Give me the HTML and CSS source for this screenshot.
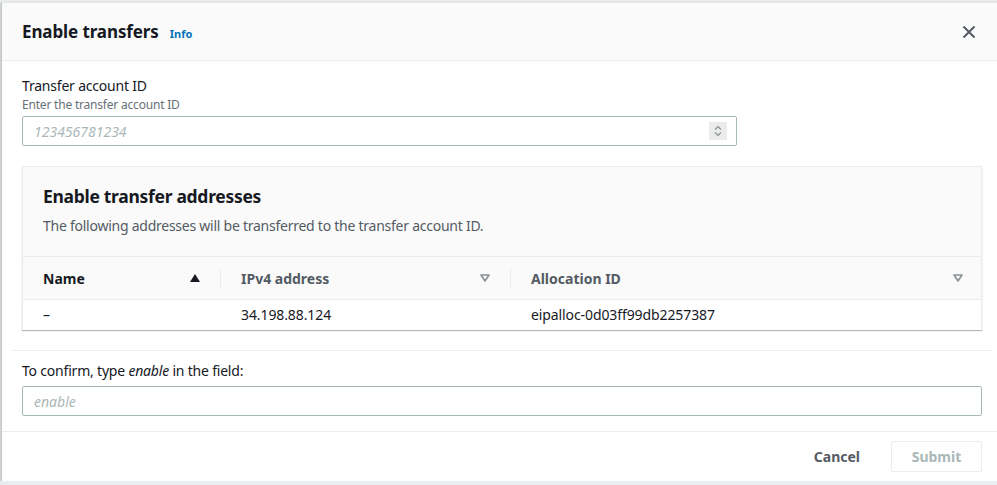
FILE: index.html
```html
<!DOCTYPE html>
<html lang="en">
<head>
    <meta charset="UTF-8">
    <meta name="viewport" content="width=device-width, initial-scale=1.0">
    <link rel="stylesheet" href="styles.css">
    <title>Enable transfers</title>
</head>
<body>
    <div class="modal">
        <div class="modal-header">
            <h2 class="modal-title">Enable transfers</h2>
            <a class="info" href="#">Info</a>
            <button class="close" aria-label="Close">
                <svg width="14" height="14" viewBox="0 0 14 14"><path d="M1.5 1.5 L12.5 12.5 M12.5 1.5 L1.5 12.5" stroke="#545b64" stroke-width="2" fill="none"/></svg>
            </button>
        </div>

        <div class="modal-body">
            <div class="field">
                <label class="label">Transfer account ID</label>
                <div class="hint">Enter the transfer account ID</div>
                <div class="input number-input">
                    <span class="placeholder">123456781234</span>
                    <span class="spinner">
                        <svg width="18" height="18" viewBox="0 0 18 18"><path d="M6 7.5 L9 4.5 L12 7.5 M6 10.5 L9 13.5 L12 10.5" stroke="#879196" stroke-width="1.2" fill="none"/></svg>
                    </span>
                </div>
            </div>

            <div class="container">
                <div class="container-header">
                    <h3 class="container-title">Enable transfer addresses</h3>
                    <p class="container-desc">The following addresses will be transferred to the transfer account ID.</p>
                </div>
                <div class="table">
                    <div class="th">
                        <span>Name</span>
                        <svg width="12" height="10" viewBox="0 0 12 10"><path d="M1 9 L6 1 L11 9 Z" fill="#16191f"/></svg>
                    </div>
                    <div class="th">
                        <span>IPv4 address</span>
                        <svg width="12" height="10" viewBox="0 0 12 10"><path d="M2 2 L10 2 L6 8 Z" stroke="#879196" stroke-width="1.6" fill="none" stroke-linejoin="round"/></svg>
                    </div>
                    <div class="th last">
                        <span>Allocation ID</span>
                        <svg width="12" height="10" viewBox="0 0 12 10"><path d="M2 2 L10 2 L6 8 Z" stroke="#879196" stroke-width="1.6" fill="none" stroke-linejoin="round"/></svg>
                    </div>
                    <div class="td">–</div>
                    <div class="td">34.198.88.124</div>
                    <div class="td">eipalloc-0d03ff99db2257387</div>
                </div>
            </div>

            <hr class="divider">

            <div class="field confirm">
                <label class="label">To confirm, type <em>enable</em> in the field:</label>
                <div class="input">
                    <span class="placeholder">enable</span>
                </div>
            </div>
        </div>

        <div class="modal-footer">
            <button class="btn-link">Cancel</button>
            <button class="btn-primary" disabled>Submit</button>
        </div>
    </div>
</body>
</html>
```

FILE: styles.css
```css
body {
    margin: 0;
    background-color: #eaeded;
    font-family: "Noto Sans", "Open Sans", sans-serif;
    color: #16191f;
    overflow: hidden;
}

.modal {
    margin: 2px 0 0 1px;
    width: 1000px;
    background-color: #fff;
    border-left: 1px solid #c4c7c8;
    border-top: 1px solid #e4e6e6;
    box-shadow: 0 1px 2px rgba(0, 0, 0, 0.35);
}

.modal-header {
    display: flex;
    align-items: center;
    height: 57px;
    padding: 0 20px;
    background-color: #fafafa;
    border-bottom: 1px solid #eaeded;
}

.modal-title {
    margin: 0;
    font-size: 17px;
    font-weight: 700;
    line-height: 22px;
    letter-spacing: -0.1px;
}

.info {
    margin-left: 11px;
    margin-top: 4px;
    font-size: 11px;
    font-weight: 700;
    color: #0073bb;
    text-decoration: none;
}

.close {
    margin-left: auto;
    margin-right: 6px;
    padding: 0;
    border: none;
    background: none;
    display: flex;
}

.modal-body {
    padding: 14px 20px 0 20px;
}

.label {
    display: block;
    font-size: 14px;
    line-height: 22px;
    letter-spacing: -0.2px;
}

.hint {
    font-size: 12px;
    line-height: 16px;
    color: #687078;
    margin-bottom: 3px;
    letter-spacing: -0.2px;
}

.input {
    box-sizing: border-box;
    height: 30px;
    border: 1px solid #aab7b8;
    border-radius: 2px;
    display: flex;
    align-items: center;
    padding: 0 11px;
    font-size: 14px;
}

.number-input {
    width: 715px;
    padding-right: 9px;
}

.placeholder {
    font-style: italic;
    color: #aab7b8;
}

.spinner {
    margin-left: auto;
    width: 18px;
    height: 18px;
    background-color: #ebebeb;
    display: flex;
}

.container {
    margin-top: 20px;
    border: 1px solid #eaeded;
    border-bottom: none;
    box-shadow: 0 1px 1px 0 rgba(0, 21, 41, 0.3);
}

.container-header {
    background-color: #fafafa;
    padding: 18px 20px 20px 20px;
    border-bottom: 1px solid #eaeded;
}

.container-title {
    margin: 0;
    font-size: 17.5px;
    font-weight: 700;
    line-height: 22px;
    letter-spacing: -0.3px;
}

.container-desc {
    margin: 9px 0 0 0;
    font-size: 14px;
    line-height: 20px;
    color: #545b64;
    letter-spacing: -0.25px;
}

.table {
    display: grid;
    grid-template-columns: 198px 290px 1fr;
}

.th {
    display: flex;
    align-items: center;
    justify-content: space-between;
    height: 42px;
    padding: 0 20px;
    background-color: #fafafa;
    border-bottom: 1px solid #eaeded;
    font-size: 14px;
    font-weight: 700;
    color: #545b64;
    position: relative;
}

.th:first-child {
    color: #16191f;
}

.th.last {
    padding-right: 17px;
}

.th:not(.last)::after {
    content: "";
    position: absolute;
    right: 0;
    top: 11px;
    height: 21px;
    border-right: 1px solid #eaeded;
}

.td {
    height: 30px;
    line-height: 30px;
    padding: 0 20px;
    font-size: 14px;
    letter-spacing: -0.1px;
}

.divider {
    margin: 20px -10px 0 -10px;
    border: none;
    border-top: 1px solid #eaeded;
}

.confirm {
    margin-top: 9px;
}

.confirm .label {
    margin-bottom: 4px;
}

.modal-footer {
    display: flex;
    align-items: center;
    justify-content: flex-end;
    margin-top: 15px;
    height: 49px;
    padding: 0 20px;
    border-top: 1px solid #eaeded;
}

.btn-link {
    border: none;
    background: none;
    font-family: inherit;
    font-size: 14px;
    font-weight: 700;
    color: #545b64;
    margin-right: 25px;
}

.btn-primary {
    box-sizing: border-box;
    width: 91px;
    height: 31px;
    border: 1px solid #eaeded;
    border-radius: 2px;
    background-color: #fff;
    font-family: inherit;
    font-size: 14px;
    font-weight: 700;
    color: #aab7b8;
}
```
